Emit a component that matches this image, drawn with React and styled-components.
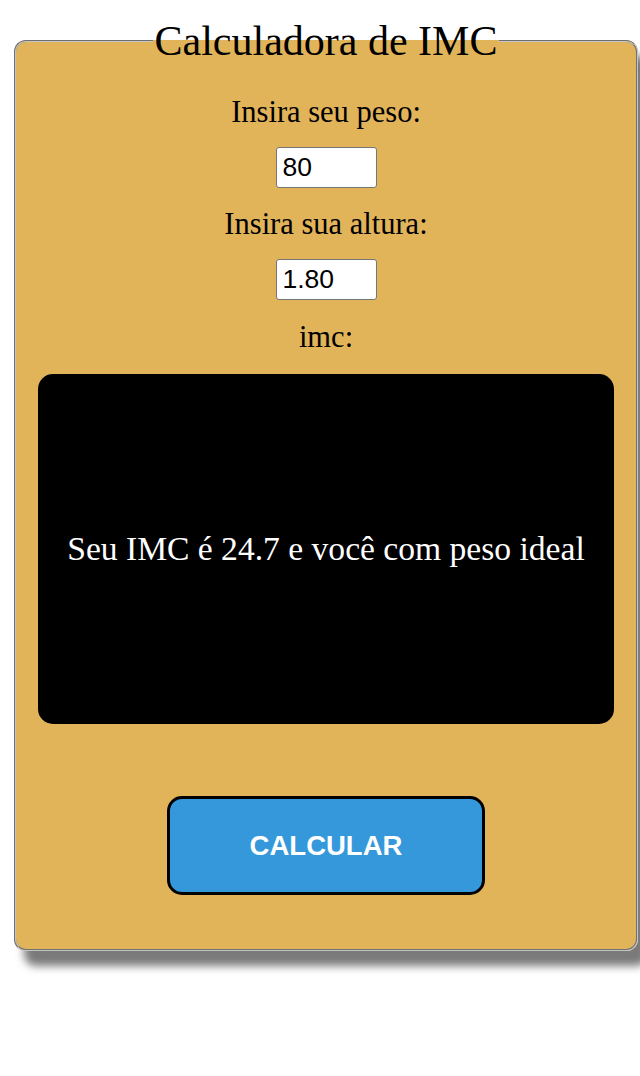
import React from "react";
import styled, { createGlobalStyle } from "styled-components";

const GlobalStyle = createGlobalStyle`
  body {
    margin: 0;
    background: #fff;
    font-family: "Liberation Serif", "Times New Roman", serif;
  }
`;

const Page = styled.div`
  padding: 17px 2px 48px 14px;
`;

const Card = styled.fieldset`
  box-sizing: border-box;
  width: 624px;
  margin: 0;
  padding: 30px 22px 54px;
  background-color: #e2b45a;
  border: 2px groove #c4c4c4;
  border-radius: 12px;
  box-shadow: 10px 15px 9px #7a7a7a;
`;

const Title = styled.legend`
  margin: 0 auto;
  padding: 0 2px;
  font-size: 42px;
  line-height: 1.15;
  color: #000;
`;

const Form = styled.div`
  display: flex;
  flex-direction: column;
  align-items: center;
`;

const Label = styled.label`
  display: block;
  font-size: 30.5px;
  line-height: 34px;
  color: #000;
  margin-bottom: ${(p) => p.$gap || 18}px;
`;

const Input = styled.input`
  box-sizing: border-box;
  width: 101px;
  height: 41px;
  padding: 0 6px;
  font-family: "Liberation Sans", Arial, sans-serif;
  font-size: 26.5px;
  color: #000;
  background: #fff;
  border: 1px solid #767676;
  border-radius: 3px;
  margin-bottom: ${(p) => p.$gap || 20}px;
`;

const Result = styled.div`
  box-sizing: border-box;
  align-self: stretch;
  height: 350px;
  margin-top: 3px;
  display: flex;
  align-items: center;
  justify-content: center;
  background: #000;
  color: #fff;
  border-radius: 15px;
  font-size: 33.6px;
  text-align: center;
`;

const Button = styled.button`
  box-sizing: border-box;
  width: 318px;
  height: 99px;
  margin-top: 72px;
  background: #3498db;
  color: #fff;
  border: 3px solid #000;
  border-radius: 15px;
  font-family: "Liberation Sans", Arial, sans-serif;
  font-weight: bold;
  font-size: 27.5px;
  cursor: pointer;
`;

export default function App() {
  return (
    <Page>
      <GlobalStyle />
      <Card>
        <Title>Calculadora de IMC</Title>
        <Form>
          <Label htmlFor="peso">Insira seu peso:</Label>
          <Input id="peso" defaultValue="80" $gap={19} />
          <Label htmlFor="altura">Insira sua altura:</Label>
          <Input id="altura" defaultValue="1.80" />
          <Label $gap={17}>imc:</Label>
          <Result>Seu IMC é 24.7 e você com peso ideal</Result>
          <Button>CALCULAR</Button>
        </Form>
      </Card>
    </Page>
  );
}
